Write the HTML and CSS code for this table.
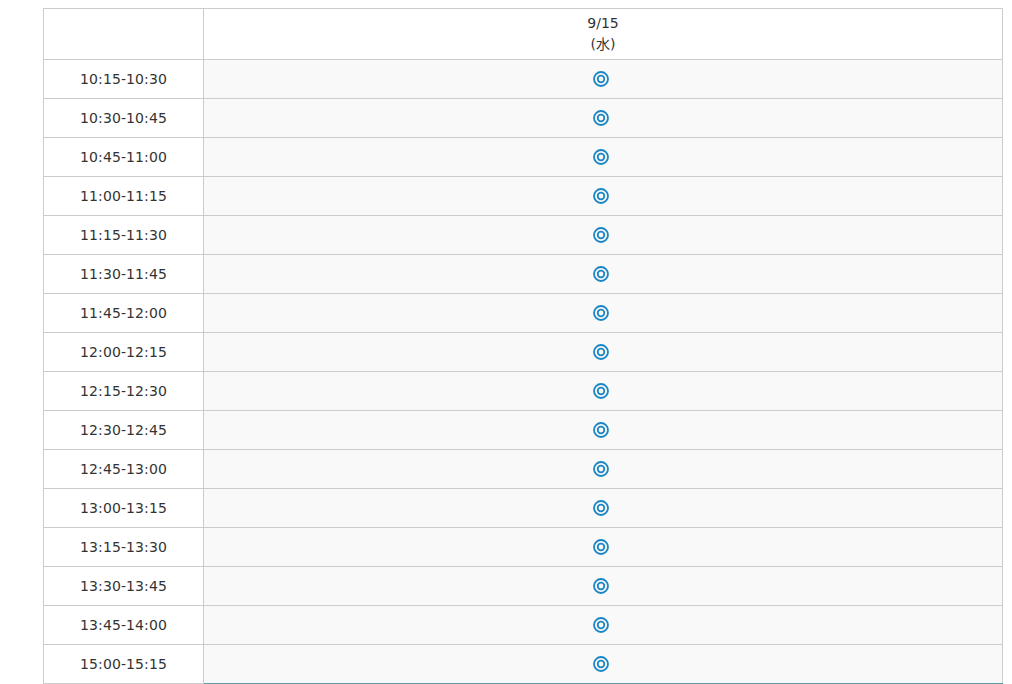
FILE: index.html
```html
<!DOCTYPE html>
<html lang="ja">
<head>
<meta charset="utf-8">
<link rel="stylesheet" href="styles.css">
</head>
<body>
<div class="wrap">
<table class="sched">
<thead>
<tr><th class="time-h"></th><th class="day-h">9/15<br>(水)</th></tr>
</thead>
<tbody id="rows">
<tr><td class="time">10:15-10:30</td><td class="slot"><svg class="ok" viewBox="0 0 16 16"><circle cx="8" cy="8" r="7"/><circle cx="8" cy="8" r="3.3"/></svg></td></tr>
<tr><td class="time">10:30-10:45</td><td class="slot"><svg class="ok" viewBox="0 0 16 16"><circle cx="8" cy="8" r="7"/><circle cx="8" cy="8" r="3.3"/></svg></td></tr>
<tr><td class="time">10:45-11:00</td><td class="slot"><svg class="ok" viewBox="0 0 16 16"><circle cx="8" cy="8" r="7"/><circle cx="8" cy="8" r="3.3"/></svg></td></tr>
<tr><td class="time">11:00-11:15</td><td class="slot"><svg class="ok" viewBox="0 0 16 16"><circle cx="8" cy="8" r="7"/><circle cx="8" cy="8" r="3.3"/></svg></td></tr>
<tr><td class="time">11:15-11:30</td><td class="slot"><svg class="ok" viewBox="0 0 16 16"><circle cx="8" cy="8" r="7"/><circle cx="8" cy="8" r="3.3"/></svg></td></tr>
<tr><td class="time">11:30-11:45</td><td class="slot"><svg class="ok" viewBox="0 0 16 16"><circle cx="8" cy="8" r="7"/><circle cx="8" cy="8" r="3.3"/></svg></td></tr>
<tr><td class="time">11:45-12:00</td><td class="slot"><svg class="ok" viewBox="0 0 16 16"><circle cx="8" cy="8" r="7"/><circle cx="8" cy="8" r="3.3"/></svg></td></tr>
<tr><td class="time">12:00-12:15</td><td class="slot"><svg class="ok" viewBox="0 0 16 16"><circle cx="8" cy="8" r="7"/><circle cx="8" cy="8" r="3.3"/></svg></td></tr>
<tr><td class="time">12:15-12:30</td><td class="slot"><svg class="ok" viewBox="0 0 16 16"><circle cx="8" cy="8" r="7"/><circle cx="8" cy="8" r="3.3"/></svg></td></tr>
<tr><td class="time">12:30-12:45</td><td class="slot"><svg class="ok" viewBox="0 0 16 16"><circle cx="8" cy="8" r="7"/><circle cx="8" cy="8" r="3.3"/></svg></td></tr>
<tr><td class="time">12:45-13:00</td><td class="slot"><svg class="ok" viewBox="0 0 16 16"><circle cx="8" cy="8" r="7"/><circle cx="8" cy="8" r="3.3"/></svg></td></tr>
<tr><td class="time">13:00-13:15</td><td class="slot"><svg class="ok" viewBox="0 0 16 16"><circle cx="8" cy="8" r="7"/><circle cx="8" cy="8" r="3.3"/></svg></td></tr>
<tr><td class="time">13:15-13:30</td><td class="slot"><svg class="ok" viewBox="0 0 16 16"><circle cx="8" cy="8" r="7"/><circle cx="8" cy="8" r="3.3"/></svg></td></tr>
<tr><td class="time">13:30-13:45</td><td class="slot"><svg class="ok" viewBox="0 0 16 16"><circle cx="8" cy="8" r="7"/><circle cx="8" cy="8" r="3.3"/></svg></td></tr>
<tr><td class="time">13:45-14:00</td><td class="slot"><svg class="ok" viewBox="0 0 16 16"><circle cx="8" cy="8" r="7"/><circle cx="8" cy="8" r="3.3"/></svg></td></tr>
<tr class="last"><td class="time">15:00-15:15</td><td class="slot"><svg class="ok" viewBox="0 0 16 16"><circle cx="8" cy="8" r="7"/><circle cx="8" cy="8" r="3.3"/></svg></td></tr>
</tbody>
</table>
</div>
</body>
</html>
```

FILE: styles.css
```css
html, body {
  margin: 0;
  padding: 0;
  background: #fff;
}
body {
  font-family: "DejaVu Sans", Verdana, "Noto Sans CJK JP", sans-serif;
  font-size: 14px;
  color: #333;
}
.wrap {
  padding: 8px 0 0 43px;
}
.sched {
  border-collapse: collapse;
  width: 960px;
  table-layout: fixed;
}
.sched th,
.sched td {
  border: 1px solid #ccc;
  text-align: center;
  vertical-align: middle;
  padding: 0;
}
.time-h {
  width: 159px;
}
.day-h {
  font-weight: normal;
  font-size: 14px;
  line-height: 21px;
  height: 50px;
  padding: 0 4px 0 0;
}
.sched tbody td {
  height: 38px;
}
.time {
  background: #fff;
  letter-spacing: 0.1px;
}
.slot {
  background: #f9f9f9;
  padding-right: 5px !important;
}
.ok {
  display: block;
  width: 16px;
  height: 16px;
  margin: 0 auto;
  fill: none;
  stroke: #1a86c4;
  stroke-width: 1.8;
}
.last .slot {
  border-bottom-color: #5f9ea0;
}
```
